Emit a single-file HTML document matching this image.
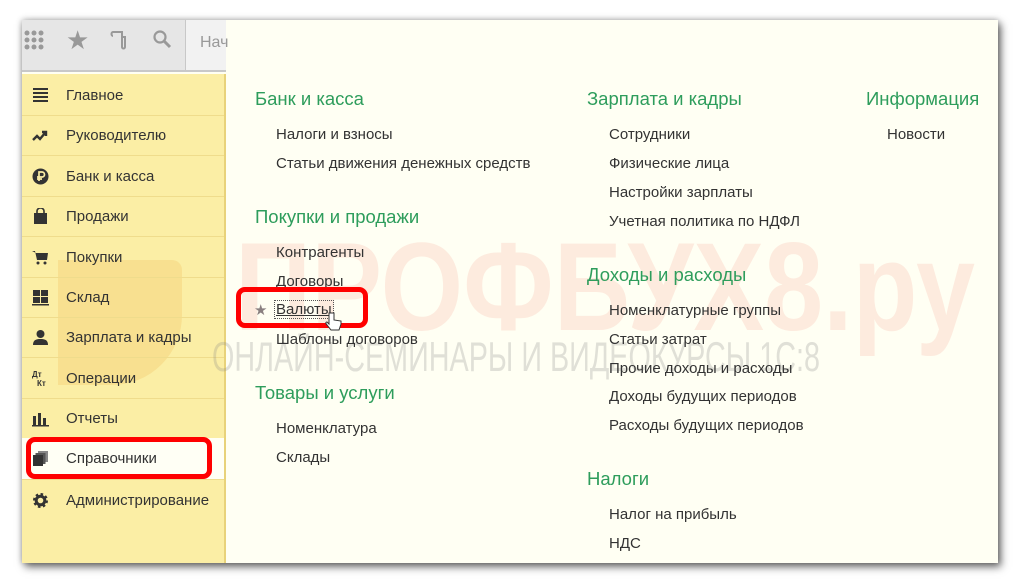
<!DOCTYPE html>
<html><head><meta charset="utf-8"><style>
*{margin:0;padding:0;box-sizing:border-box}
body{width:1018px;height:583px;background:#fff;position:relative;overflow:hidden;font-family:"Liberation Sans",Arial,sans-serif}
.win{position:absolute;left:22px;top:20px;width:976px;height:543px;background:#fffff3;box-shadow:3px 4px 8px rgba(0,0,0,.55),0 0 6px rgba(0,0,0,.3);overflow:hidden}
.tb{position:absolute;left:0;top:0;width:204px;height:52px;background:#e6e6e6;border-bottom:2px solid #c8c8c8}
.tb2{position:absolute;left:163px;top:0;width:41px;height:52px;background:#f2f2f2;border-left:1px solid #c8c8c8;border-bottom:2px solid #c8c8c8}
.side{position:absolute;left:0;top:54px;width:204px;height:489px;background:#fbeea5;border-right:2px solid #e8d27a}
.it{position:absolute;left:0;width:202px;height:41px;border-bottom:1px solid #efdc8c;font-size:15px;color:#333;line-height:41px;padding-left:44px}
.ic{position:absolute;left:10px;top:12px;width:17px;height:17px}
.m{position:absolute;font-size:15px;color:#333;white-space:nowrap}
.h{position:absolute;font-size:18.5px;color:#2e9d5c;white-space:nowrap}
</style></head><body>
<div class="win">
<div class="side">
<div style="position:absolute;left:36px;top:186px;width:124px;height:125px;background:rgba(240,170,60,.2);border-radius:0 10px 70px 0"></div>
<div class="it" style="top:1px">Главное<svg class="ic" viewBox="0 0 17 17"><path d="M1 2h15M1 6h15M1 10h15M1 14h15" stroke="#333" stroke-width="2"/></svg></div>
<div class="it" style="top:41px">Руководителю<svg class="ic" viewBox="0 0 17 17"><path d="M1 13l4-4 3 3 5-6M10 5h4v4" stroke="#333" stroke-width="2.4" fill="none"/></svg></div>
<div class="it" style="top:82px">Банк и касса<svg class="ic" viewBox="0 0 17 17"><circle cx="8.5" cy="8.5" r="8" fill="#333"/><path d="M7 13V4h3a2 2 0 010 5H5M5 11h5" stroke="#fbeea5" stroke-width="1.7" fill="none"/></svg></div>
<div class="it" style="top:122px">Продажи<svg class="ic" viewBox="0 0 17 17"><path d="M2 5h13v11H2z" fill="#333"/><path d="M5 6V3a3.5 3 0 017 0v3" stroke="#333" stroke-width="1.6" fill="none"/></svg></div>
<div class="it" style="top:163px">Покупки<svg class="ic" viewBox="0 0 17 17"><path d="M0 2h3l2 9h10l1-7H4" fill="#333"/><circle cx="6" cy="14" r="1.5" fill="#333"/><circle cx="13" cy="14" r="1.5" fill="#333"/></svg></div>
<div class="it" style="top:203px">Склад<svg class="ic" viewBox="0 0 17 17"><path d="M1 1h7v6H1zM9 1h7v6H9zM1 8h7v6H1zM9 8h7v6H9zM0 15h17v1.5H0z" fill="#333"/></svg></div>
<div class="it" style="top:243px">Зарплата и кадры<svg class="ic" viewBox="0 0 17 17"><circle cx="8.5" cy="5" r="4" fill="#333"/><path d="M1 16c0-5 3-6 7.5-6s7.5 1 7.5 6z" fill="#333"/></svg></div>
<div class="it" style="top:284px">Операции<svg class="ic" viewBox="0 0 17 17"><text x="0" y="7" font-size="8" font-weight="bold" fill="#333" font-family="Liberation Sans">Дт</text><text x="5" y="16" font-size="8" font-weight="bold" fill="#333" font-family="Liberation Sans">Кт</text></svg></div>
<div class="it" style="top:324px">Отчеты<svg class="ic" viewBox="0 0 17 17"><path d="M1 6h3v9H1zM6 3h3v12H6zM11 8h3v7h-3zM0 15h17v1.5H0z" fill="#333"/></svg></div>
<div class="it" style="top:364px;background:#fffff5;height:42px;line-height:42px">Справочники<svg class="ic" viewBox="0 0 17 17"><path d="M6 1h10v11H6z" fill="#888"/><path d="M3.5 3h10v11h-10z" fill="#555"/><path d="M1 5h10v11H1z" fill="#333"/></svg></div>
<div class="it" style="top:406px;border:none">Администрирование<svg class="ic" viewBox="0 0 17 17"><circle cx="8.5" cy="8.5" r="5.5" fill="none" stroke="#333" stroke-width="4" stroke-dasharray="2.2 2.1"/><circle cx="8.5" cy="8.5" r="4.3" fill="none" stroke="#333" stroke-width="3"/></svg></div>
</div>
<div class="tb"><svg style="position:absolute;left:2px;top:10px" width="22" height="22" viewBox="0 0 22 22" fill="#999"><circle cx="3" cy="3" r="2.5"/><circle cx="10" cy="3" r="2.5"/><circle cx="17" cy="3" r="2.5"/><circle cx="3" cy="10" r="2.5"/><circle cx="10" cy="10" r="2.5"/><circle cx="17" cy="10" r="2.5"/><circle cx="3" cy="17" r="2.5"/><circle cx="10" cy="17" r="2.5"/><circle cx="17" cy="17" r="2.5"/></svg>
<div style="position:absolute;left:44px;top:5px;font-size:26px;color:#999">★</div>
<svg style="position:absolute;left:88px;top:9px" width="20" height="22" viewBox="0 0 20 22"><path d="M3 3h9v15c0 2 3 2 3 0V8h-3M3 3c-2 0-2 4 0 4" stroke="#999" stroke-width="2" fill="none"/></svg>
<svg style="position:absolute;left:130px;top:9px" width="22" height="22" viewBox="0 0 22 22"><circle cx="8" cy="8" r="5.5" stroke="#999" stroke-width="2.2" fill="none"/><path d="M12 12l6 6" stroke="#999" stroke-width="3"/></svg>
</div>
<div class="tb2"><span style="position:absolute;left:14px;top:14px;font-size:16px;color:#999">Нач</span></div>
<svg style="position:absolute;left:0;top:0" width="976" height="543">
<text x="213" y="310" font-size="125" font-weight="bold" font-family="Liberation Sans" fill="rgba(240,120,110,.15)" textLength="740" lengthAdjust="spacingAndGlyphs">ПРОФБУХ8.ру</text>
<text x="190" y="351" font-size="42" font-family="Liberation Sans" fill="rgba(130,130,130,.25)" textLength="608" lengthAdjust="spacingAndGlyphs">ОНЛАЙН-СЕМИНАРЫ И ВИДЕОКУРСЫ 1С:8</text>
</svg>
<div class="h" style="left:233px;top:68px">Банк и касса</div>
<div class="m" style="left:254px;top:106px">Налоги и взносы</div>
<div class="m" style="left:254px;top:135px">Статьи движения денежных средств</div>
<div class="h" style="left:233px;top:186px">Покупки и продажи</div>
<div class="m" style="left:254px;top:224px">Контрагенты</div>
<div class="m" style="left:254px;top:253px">Договоры</div>
<div class="m" style="left:232px;top:281px;color:#8a8080">★</div>
<div class="m" style="left:252px;top:280px;border:1px dotted #555;padding:0 1px;text-decoration:underline">Валюты</div>
<div class="m" style="left:254px;top:311px">Шаблоны договоров</div>
<div class="h" style="left:233px;top:362px">Товары и услуги</div>
<div class="m" style="left:254px;top:400px">Номенклатура</div>
<div class="m" style="left:254px;top:429px">Склады</div>
<div class="h" style="left:565px;top:68px">Зарплата и кадры</div>
<div class="m" style="left:587px;top:106px">Сотрудники</div>
<div class="m" style="left:587px;top:135px">Физические лица</div>
<div class="m" style="left:587px;top:164px">Настройки зарплаты</div>
<div class="m" style="left:587px;top:193px">Учетная политика по НДФЛ</div>
<div class="h" style="left:565px;top:244px">Доходы и расходы</div>
<div class="m" style="left:587px;top:282px">Номенклатурные группы</div>
<div class="m" style="left:587px;top:311px">Статьи затрат</div>
<div class="m" style="left:587px;top:340px">Прочие доходы и расходы</div>
<div class="m" style="left:587px;top:368px">Доходы будущих периодов</div>
<div class="m" style="left:587px;top:397px">Расходы будущих периодов</div>
<div class="h" style="left:565px;top:448px">Налоги</div>
<div class="m" style="left:587px;top:486px">Налог на прибыль</div>
<div class="m" style="left:587px;top:515px">НДС</div>
<div class="h" style="left:844px;top:68px">Информация</div>
<div class="m" style="left:865px;top:106px">Новости</div>
</div>
<div style="position:absolute;left:26px;top:437px;width:186px;height:42px;border:5px solid #f00;border-radius:9px"></div>
<div style="position:absolute;left:236px;top:287px;width:132px;height:41px;border:5px solid #f00;border-radius:9px"></div>
<svg style="position:absolute;left:325px;top:312px" width="18" height="20" viewBox="0 0 18 20"><path d="M4 1v11l-2-2c-2 0-1 2 0 3l4 5h8l2-6V9l-7-1V1z" fill="#fff" stroke="#333" stroke-width="1"/></svg>
</body></html>
